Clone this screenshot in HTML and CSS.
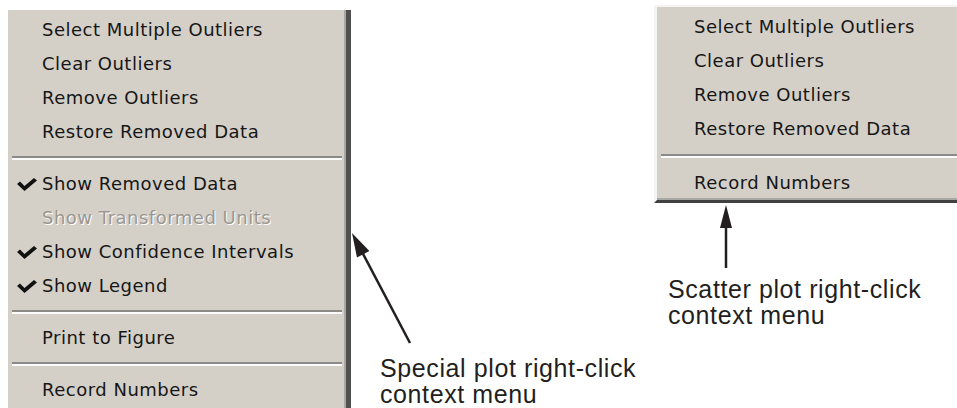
FILE: index.html
```html
<!DOCTYPE html>
<html lang="en">
<head>
    <meta charset="UTF-8">
    <title>Context menus</title>
    <link rel="stylesheet" href="styles.css">
</head>
<body>
    <div class="figure">
        <!-- special plot menu -->
        <div class="menu menu-special">
            <div class="item">Select Multiple Outliers</div>
            <div class="item">Clear Outliers</div>
            <div class="item">Remove Outliers</div>
            <div class="item">Restore Removed Data</div>
            <div class="sep"></div>
            <div class="item checked">Show Removed Data</div>
            <div class="item disabled">Show Transformed Units</div>
            <div class="item checked">Show Confidence Intervals</div>
            <div class="item checked">Show Legend</div>
            <div class="sep"></div>
            <div class="item">Print to Figure</div>
            <div class="sep"></div>
            <div class="item">Record Numbers</div>
        </div>

        <div class="caption caption-special">Special plot right-click<br>context menu</div>

        <div class="side">
            <!-- scatter plot menu -->
            <div class="menu menu-scatter">
                <div class="item">Select Multiple Outliers</div>
                <div class="item">Clear Outliers</div>
                <div class="item">Remove Outliers</div>
                <div class="item">Restore Removed Data</div>
                <div class="sep"></div>
                <div class="item">Record Numbers</div>
            </div>
            <div class="caption caption-scatter">Scatter plot right-click<br>context menu</div>
        </div>

        <svg class="arrows" width="957" height="408" viewBox="0 0 957 408">
            <line x1="410" y1="343" x2="361" y2="250" stroke="#231f20" stroke-width="2.5"/>
            <polygon points="352,233 369.4,251 357,257.6" fill="#231f20"/>
            <line x1="726" y1="268" x2="726" y2="222" stroke="#231f20" stroke-width="2.5"/>
            <polygon points="726,205 732,228 720,228" fill="#231f20"/>
        </svg>
    </div>
</body>
</html>
```
FILE: styles.css
```css
body {
    margin: 0;
    background-color: white;
}

.figure {
    position: relative;
    display: flex;
    width: 957px;
    height: 408px;
    overflow: hidden;
}

.menu {
    background-color: #d4d0c8;
    font-family: "DejaVu Sans", sans-serif;
    font-size: 18px;
    letter-spacing: 0.5px;
    color: #161616;
    flex-shrink: 0;
}

.menu-special {
    width: 338px;
    height: 420px;
    margin: 10px 0 0 8px;
    padding-top: 3px;
    border-right: 5px solid #505050;
    box-shadow: inset -2px 0 0 #a8a8a4;
}

.menu-special .item {
    padding-left: 34px;
}

.menu-scatter {
    width: 320px;
    margin-top: 5px;
    padding-top: 3px;
    border-top: 2px solid #f4f4f2;
    border-left: 3px solid #f4f4f2;
    border-bottom: 3px solid #404040;
    box-shadow: inset 0 -2px 0 #a8a8a4;
}

.menu-scatter .item {
    padding-left: 37px;
}

.menu-scatter .sep {
    height: 20px;
}

.item {
    position: relative;
    height: 34px;
    line-height: 34px;
    white-space: nowrap;
}

.item.checked::before {
    content: "";
    position: absolute;
    left: 9px;
    top: 11px;
    width: 20px;
    height: 13px;
    background: url("data:image/svg+xml,%3Csvg xmlns='http://www.w3.org/2000/svg' viewBox='0 0 20 13'%3E%3Cpolygon points='0,6 3,3.5 7.5,8 17,0 20,2.5 7.5,13' fill='%23111'/%3E%3C/svg%3E") no-repeat;
}

.item.disabled {
    color: #9a9792;
    text-shadow: 1px 1px 0 #fff;
}

.sep {
    height: 18px;
    margin: 0 4px;
    display: flex;
    flex-direction: column;
    justify-content: center;
}

.sep::before {
    content: "";
    height: 2px;
    background-color: #8c8a86;
    border-bottom: 2px solid #fbfbfa;
}

.caption {
    font-family: "Liberation Sans", Arial, sans-serif;
    font-size: 25px;
    line-height: 26px;
    letter-spacing: 0.6px;
    color: #231f20;
}

.caption-special {
    align-self: flex-end;
    margin: 0 0 1px 29px;
    white-space: nowrap;
}

.side {
    margin-left: auto;
    width: 303px;
    flex-shrink: 0;
}

.caption-scatter {
    margin: 73px 0 0 14px;
    white-space: nowrap;
}

.arrows {
    position: absolute;
    left: 0;
    top: 0;
}
```
